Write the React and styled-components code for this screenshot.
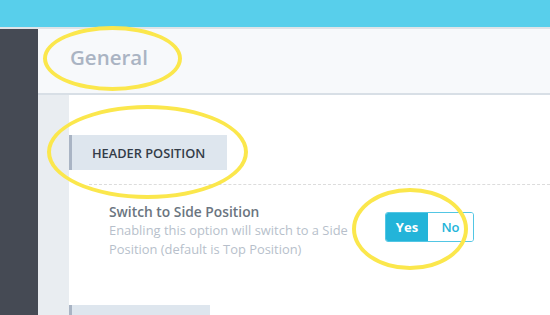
import React from "react";
import styled, { createGlobalStyle } from "styled-components";

const Global = createGlobalStyle`
  html, body { margin: 0; padding: 0; }
  body { width: 550px; height: 315px; overflow: hidden; background: #fff; font-family: "Open Sans", "Liberation Sans", sans-serif; }
`;

const Page = styled.div`
  position: relative;
  width: 550px;
  height: 315px;
  display: flex;
  flex-direction: column;
  overflow: hidden;
`;

const TopBar = styled.div`
  height: 27px;
  flex: none;
  background: #58cfeb;
  border-bottom: 2px solid #dfe4e8;
`;

const Shell = styled.div`
  flex: 1;
  display: flex;
  min-height: 0;
`;

const Sidebar = styled.div`
  width: 38px;
  flex: none;
  background: #454a54;
`;

const Main = styled.div`
  flex: 1;
  display: flex;
  flex-direction: column;
`;

const PageHeader = styled.div`
  height: 66px;
  flex: none;
  box-sizing: border-box;
  background: #f7f9fb;
  border-bottom: 2px solid #d8dfe6;
  display: flex;
  align-items: center;
  padding: 0 0 8px 32px;
`;

const Title = styled.h1`
  margin: 0;
  font-size: 20.5px;
  font-weight: 600;
  color: #aab4c3;
`;

const Body = styled.div`
  flex: 1;
  display: flex;
`;

const Strip = styled.div`
  width: 31px;
  flex: none;
  background: #e9edf1;
`;

const Content = styled.div`
  flex: 1;
  display: flex;
  flex-direction: column;
  padding-top: 40px;
`;

const SectionTag = styled.div`
  width: ${(p) => p.$w}px;
  height: 35px;
  box-sizing: border-box;
  flex: none;
  background: #dee6ee;
  border-left: 3px solid #a9b4c4;
  display: flex;
  align-items: center;
  padding-left: 20px;
  font-size: 12.8px;
  font-weight: 600;
  color: #333c48;
  text-transform: uppercase;
`;

const Divider = styled.div`
  margin: 14px 0 0 20px;
  border-top: 1px dashed #dcdcdc;
`;

const Setting = styled.div`
  display: flex;
  align-items: flex-start;
  padding: 17px 0 0 40px;
  height: 120px;
  box-sizing: border-box;
`;

const Info = styled.div`
  width: 250px;
`;

const Label = styled.div`
  font-size: 13.8px;
  font-weight: 600;
  color: #6b7580;
  line-height: 19px;
`;

const Desc = styled.div`
  font-size: 12.9px;
  color: #b7bfcb;
  line-height: 19px;
`;

const Toggle = styled.div`
  display: flex;
  margin: 10px 0 0 26px;
  height: 30px;
  border: 1px solid #52c6e4;
  border-radius: 3px;
  box-sizing: border-box;
  overflow: hidden;
`;

const Opt = styled.button`
  border: none;
  margin: 0;
  padding: 0;
  width: ${(p) => p.$w}px;
  height: 100%;
  font-family: inherit;
  font-size: 13px;
  font-weight: ${(p) => (p.$on ? 700 : 600)};
  background: ${(p) => (p.$on ? "#23b4d9" : "#fff")};
  color: ${(p) => (p.$on ? "#fff" : "#23b4d9")};
`;

const Ring = styled.div`
  position: absolute;
  left: ${(p) => p.$x}px;
  top: ${(p) => p.$y}px;
  width: ${(p) => p.$w}px;
  height: ${(p) => p.$h}px;
  box-sizing: border-box;
  border: 4px solid #fbe74c;
  border-radius: 50%;
  pointer-events: none;
`;

export default function App() {
  return (
    <>
      <Global />
      <Page>
        <TopBar />
        <Shell>
          <Sidebar />
          <Main>
            <PageHeader>
              <Title>General</Title>
            </PageHeader>
            <Body>
              <Strip />
              <Content>
                <SectionTag $w={158}>Header Position</SectionTag>
                <Divider />
                <Setting>
                  <Info>
                    <Label>Switch to Side Position</Label>
                    <Desc>
                      Enabling this option will switch to a Side Position (default is Top Position)
                    </Desc>
                  </Info>
                  <Toggle>
                    <Opt $on $w={42}>Yes</Opt>
                    <Opt $w={45}>No</Opt>
                  </Toggle>
                </Setting>
                <SectionTag $w={141} />
              </Content>
            </Body>
          </Main>
        </Shell>
        <Ring $x={43} $y={26} $w={139} $h={65} />
        <Ring $x={47} $y={105} $w={201} $h={94} />
        <Ring $x={352} $y={188} $w={116} $h={82} />
      </Page>
    </>
  );
}
